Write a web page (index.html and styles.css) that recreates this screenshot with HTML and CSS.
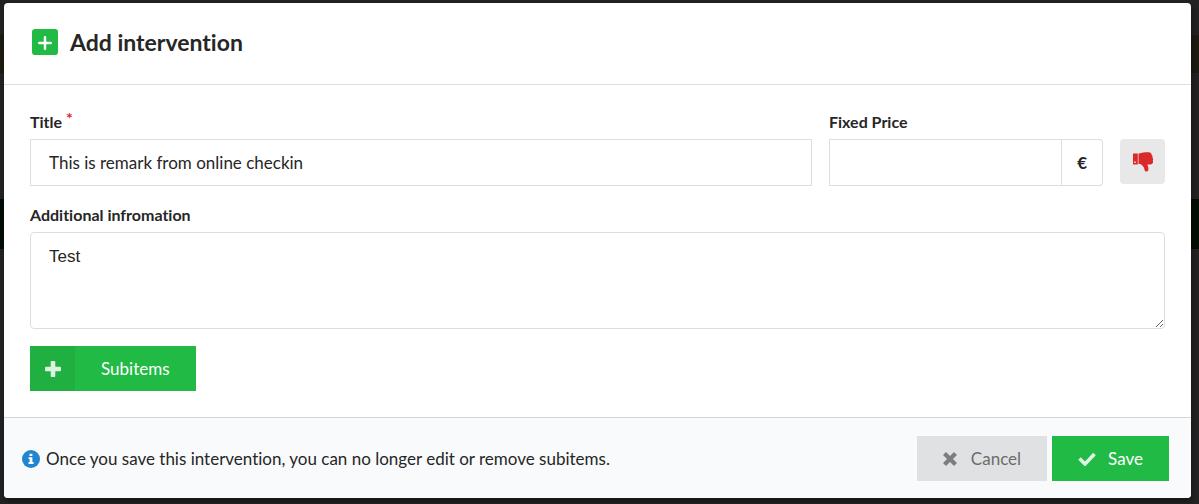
FILE: index.html
```html
<!DOCTYPE html>
<html lang="en">

<head>
    <meta charset="UTF-8">
    <meta name="viewport" content="width=device-width, initial-scale=1.0">
    <title>Add intervention</title>
    <link rel="stylesheet" href="styles.css">
</head>

<body>

    <form class="modal" id="interventionForm">
        <!-- Header -->
        <header class="modal-header">
            <svg class="header-icon" viewBox="0 0 25 25" aria-hidden="true">
                <rect width="25" height="25" rx="3" fill="#21ba45" />
                <path d="M12.5 8v11M7 13.5h11" stroke="#fff" stroke-width="2.4" stroke-linecap="round" />
            </svg>
            <h1>Add intervention</h1>
        </header>

        <!-- Fields -->
        <div class="modal-content">
            <div class="fields">
                <div class="field title-field">
                    <label for="title">Title <span class="required">*</span></label>
                    <input type="text" id="title" name="title" value="This is remark from online checkin" required>
                </div>

                <div class="field price-field">
                    <label for="price">Fixed Price</label>
                    <div class="price-input">
                        <input type="text" id="price" name="price">
                        <span class="currency">€</span>
                    </div>
                </div>

                <button type="button" class="thumb-button" aria-label="Not approved">
                    <svg viewBox="0 0 22 20" aria-hidden="true">
                        <path fill-rule="evenodd" fill="#db2828" d="M1 1.500h4.800v11H1zM2.200 9.500v1.400h1.500V9.500z" />
                        <path fill="#db2828" d="M6.500 1.500C9 1.400 11 .2 13.500.2h3.200c1.700 0 2.900.9 2.900 2.600.9.800 1.100 1.800.8 2.800.8.900.9 2 .4 3 .8 2-.3 3.800-2.200 3.800h-3.300c.8 2 1.300 3.300 1.100 5-.2 1.600-1.300 2.200-2.800 2.200-1.300-.8-1.100-2.500-1.700-4-.9-1.500-2.300-3.300-3.600-3.700H6.500z" />
                    </svg>
                </button>
            </div>

            <div class="field info-field">
                <label for="info">Additional infromation</label>
                <textarea id="info" name="info">Test</textarea>
            </div>

            <button type="button" class="button green subitems-button">
                <span class="button-icon">
                    <svg viewBox="0 0 16 16" aria-hidden="true">
                        <path d="M6.700 0h2.600q1 0 1 1v4.700H15q1 0 1 1v2.600q0 1-1 1h-4.700V15q0 1-1 1H6.700q-1 0-1-1v-4.700H1q-1 0-1-1V6.700q0-1 1-1h4.700V1q0-1 1-1z" />
                    </svg>
                </span>
                <span class="button-text">Subitems</span>
            </button>
        </div>

        <!-- Actions -->
        <footer class="modal-footer">
            <p class="note">
                <svg class="note-icon" viewBox="0 0 17 17" aria-hidden="true">
                    <circle cx="8.500" cy="8.500" r="8.500" fill="#2185d0" />
                    <path fill="#fff" d="M7.100 3.500h2.700v2.200H7.100zM6.200 6.800h3.600v4.600h1.100v1.800H6.100v-1.800h1.100V8.500h-1z" />
                </svg>
                Once you save this intervention, you can no longer edit or remove subitems.
            </p>
            <div class="actions">
                <button type="button" class="button grey">
                    <svg class="cross" viewBox="0 0 14 14" aria-hidden="true">
                        <path d="M3 3l8 8M11 3l-8 8" fill="none" stroke="currentColor" stroke-width="4.200" stroke-linecap="square" />
                    </svg>
                    Cancel
                </button>
                <button type="submit" class="button green">
                    <svg class="check" viewBox="0 0 18 14" aria-hidden="true">
                        <path d="M1.500 6.500l5.500 5.500L16.500 2" fill="none" stroke="currentColor" stroke-width="3.600" />
                    </svg>
                    Save
                </button>
            </div>
        </footer>
    </form>

</body>

</html>
```
FILE: styles.css
```css
* {
    box-sizing: border-box;
}

body {
    margin: 0;
    padding: 3px 8px 6px 4px;
    background: #222 linear-gradient(#222 35px, #1d1b10 35px, #1d1b10 73px, #222 73px, #222 199px, #020d03 199px, #020d03 249px, #222 249px) no-repeat;
    font-family: Lato, "Liberation Sans", sans-serif;
    font-size: 17px;
    line-height: 22px;
    font-variant-ligatures: none;
    color: #262626;
}

input,
textarea,
button {
    font: inherit;
    font-variant-ligatures: none;
    color: inherit;
}

.modal {
    background-color: #fff;
    border-radius: 4px;
    box-shadow: 1px 3px 4px rgba(0, 0, 0, 0.4);
    overflow: hidden;
}

.modal-header {
    display: flex;
    align-items: center;
    gap: 12px;
    padding: 25px 28px 28px;
    border-bottom: 1px solid #dededf;
}

.header-icon {
    width: 26px;
    height: 26px;
}

.modal-header h1 {
    margin: 0;
    font-size: 23px;
    line-height: 28px;
}

.modal-content {
    padding: 25px 26px 26px;
}

.fields {
    display: flex;
    align-items: flex-end;
    gap: 17px;
    margin-bottom: 18px;
}

.field label {
    display: block;
    margin-bottom: 6px;
    font-size: 16px;
    font-weight: bold;
}

.title-field {
    flex: 1;
}

.price-field {
    width: 274px;
}

.required {
    color: #db2828;
    vertical-align: 4px;
    line-height: 1;
}

.field input,
.field textarea {
    display: block;
    width: 100%;
    padding: 11px 18px;
    border: 1px solid #dededf;
    background-color: #fff;
}

.field input {
    height: 47px;
}

.price-input {
    display: flex;
}

.price-input input {
    flex: 1;
    min-width: 0;
}

.currency {
    padding: 12px 15px;
    border: 1px solid #dededf;
    border-left: 0;
    border-radius: 0 4px 4px 0;
    line-height: 21px;
    font-weight: bold;
}

.thumb-button {
    display: flex;
    align-items: center;
    justify-content: center;
    width: 45px;
    height: 45px;
    margin-bottom: 2px;
    padding: 0;
    border: 0;
    border-radius: 4px;
    background-color: #e8e8e8;
}

.thumb-button svg {
    width: 22px;
    height: 20px;
}

.field textarea {
    height: 97px;
    padding: 13px 18px;
    border-radius: 4px;
    font-family: "Liberation Sans", Arial, sans-serif;
    resize: vertical;
}

.info-field {
    margin-bottom: 17px;
}

.button {
    display: flex;
    align-items: center;
    height: 45px;
    padding: 0 26px;
    border: 0;
}

.button svg {
    fill: currentColor;
    opacity: 0.85;
}

.green {
    background-color: #21ba45;
    color: #fff;
}

.grey {
    background-color: #e0e1e2;
    color: #6b6c6c;
}

.subitems-button {
    padding: 0;
}

.button-icon {
    display: flex;
    align-items: center;
    justify-content: center;
    width: 45px;
    height: 45px;
    background-color: rgba(0, 0, 0, 0.05);
}

.button-icon svg {
    width: 16px;
    height: 16px;
}

.button-text {
    padding: 0 26px;
}

.modal-footer {
    display: flex;
    align-items: center;
    justify-content: space-between;
    padding: 18px 22px 17px 18px;
    border-top: 1px solid #d4d5d6;
    background-color: #f9fafb;
}

.note {
    display: flex;
    align-items: center;
    gap: 6px;
    margin: 0;
}

.note-icon {
    width: 18px;
    height: 18px;
}

.actions {
    display: flex;
    gap: 5px;
}

.cross {
    width: 14px;
    height: 14px;
    margin-right: 14px;
}

.check {
    width: 18px;
    height: 14px;
    margin-right: 12px;
}
```
